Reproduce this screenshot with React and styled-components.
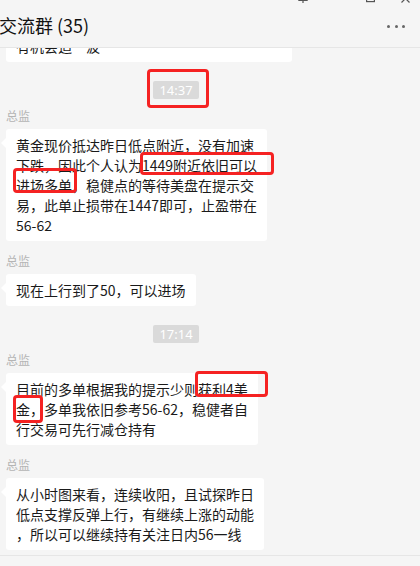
import React from 'react';
import styled, { createGlobalStyle } from 'styled-components';

const COLORS = {
    page: '#f5f5f5',
    line: '#e6e6e6',
    text: '#1a1a1a',
    name: '#b4b4b4',
    stamp: '#dadada',
    mark: '#f52222',
};

const GlobalStyle = createGlobalStyle`
  html, body {
    margin: 0;
    padding: 0;
    background: ${COLORS.page};
  }
  body {
    font-family: "Noto Sans CJK SC", "Noto Sans", sans-serif;
    -webkit-font-smoothing: antialiased;
  }
`;

const Window = styled.div`
    position: relative;
    width: 420px;
    height: 566px;
    overflow: hidden;
    display: flex;
    flex-direction: column;
    background: ${COLORS.page};
`;

const Header = styled.header`
    position: relative;
    height: 47px;
    flex-shrink: 0;
    display: flex;
    align-items: center;
    justify-content: space-between;
    padding-right: 15px;
    border-bottom: 1px solid ${COLORS.line};
`;

const Title = styled.h1`
    margin: 2px 0 0 -1px;
    font-size: 18px;
    font-weight: 400;
    color: #111;
    letter-spacing: 0;
    line-height: 24px;
`;

const Dots = styled.div`
    display: flex;
    gap: 4.5px;
    margin-top: 6px;

    span {
        width: 3px;
        height: 3px;
        border-radius: 50%;
        background: #666;
    }
`;

const Controls = styled.div`
    position: absolute;
    top: -9px;
    left: 298px;
    display: flex;
    align-items: flex-start;

    svg {
        display: block;
        stroke: #555;
        stroke-width: 1.2;
        fill: none;
    }
`;

const ChatArea = styled.main`
    flex: 1;
    overflow: hidden;
`;

// content is scrolled, so the top of the list sits above the visible area
const Feed = styled.div`
    display: flex;
    flex-direction: column;
    align-items: flex-start;
    margin-top: -58px;
    padding-left: 6px;
`;

const Message = styled.div`
    display: flex;
    flex-direction: column;
    align-items: flex-start;
    margin-bottom: 13px;
`;

const Name = styled.div`
    font-size: 12px;
    line-height: 14px;
    height: 14px;
    color: ${COLORS.name};
    margin-bottom: 6px;
`;

const Bubble = styled.div`
    position: relative;
    background: #fff;
    border-radius: 3px;
    padding: 6px 10px;
    font-size: 14px;
    line-height: 20px;
    color: ${COLORS.text};
    white-space: nowrap;

    &::before {
        content: '';
        position: absolute;
        left: -5px;
        top: 9px;
        border-style: solid;
        border-width: 5px 5px 5px 0;
        border-color: transparent #fff transparent transparent;
    }
`;

const TimeRow = styled.div`
    width: 340px;
    display: flex;
    justify-content: center;
    margin: 6px 0 10px;
`;

const Stamp = styled.span`
    background: ${COLORS.stamp};
    color: #fff;
    font-family: "Noto Sans", sans-serif;
    font-size: 13px;
    line-height: 18px;
    height: 18px;
    padding: 0 6px;
    border-radius: 2px;
`;

const Composer = styled.footer`
    height: 10px;
    flex-shrink: 0;
    border-top: 1px solid ${COLORS.line};
    background: ${COLORS.page};
`;

const Mark = styled.div`
    position: absolute;
    border: 3px solid ${COLORS.mark};
    border-radius: 4px;
    box-sizing: border-box;
    pointer-events: none;
`;

const feed = [
    { type: 'msg', lines: ['如果回调到昨日低点附近，可以轻仓试多，', '有机会追一波'] },
    { type: 'time', text: '14:37' },
    {
        type: 'msg',
        lines: [
            '黄金现价抵达昨日低点附近，没有加速',
            '下跌，因此个人认为1449附近依旧可以',
            '进场多单，稳健点的等待美盘在提示交',
            '易，此单止损带在1447即可，止盈带在',
            '56-62',
        ],
    },
    { type: 'msg', lines: ['现在上行到了50，可以进场'] },
    { type: 'time', text: '17:14' },
    {
        type: 'msg',
        lines: [
            '目前的多单根据我的提示少则获利4美',
            '金，多单我依旧参考56-62，稳健者自',
            '行交易可先行减仓持有',
        ],
    },
    {
        type: 'msg',
        lines: [
            '从小时图来看，连续收阳，且试探昨日',
            '低点支撑反弹上行，有继续上涨的动能',
            '，所以可以继续持有关注日内56一线',
        ],
    },
];

// red annotation boxes drawn over the screenshot
const marks = [
    { left: 147, top: 69, width: 62, height: 39 },
    { left: 140, top: 152, width: 134, height: 23 },
    { left: 13, top: 168, width: 64, height: 25 },
    { left: 195, top: 371, width: 73, height: 26 },
    { left: 13, top: 395, width: 30, height: 28 },
];

function App() {
    return (
        <>
            <GlobalStyle />
            <Window>
                <Header>
                    <Controls>
                        <svg width="10" height="12" viewBox="0 0 10 12">
                            <path d="M2.5 1v5.5L1 9.5h8L7.5 6.5V1zM5 9.5V12" />
                        </svg>
                        <svg width="9" height="12" viewBox="0 0 9 12" style={{ marginLeft: 58 }}>
                            <rect x="0.6" y="1" width="7.8" height="9.6" />
                        </svg>
                        <svg width="9" height="12" viewBox="0 0 9 12" style={{ marginLeft: 26 }}>
                            <path d="M0.5 3.5l8 8M8.5 3.5l-8 8" />
                        </svg>
                    </Controls>
                    <Title>交流群 (35)</Title>
                    <Dots>
                        <span />
                        <span />
                        <span />
                    </Dots>
                </Header>
                <ChatArea>
                    <Feed>
                        {feed.map((item, i) =>
                            item.type === 'time' ? (
                                <TimeRow key={i}>
                                    <Stamp>{item.text}</Stamp>
                                </TimeRow>
                            ) : (
                                <Message key={i}>
                                    <Name>总监</Name>
                                    <Bubble>
                                        {item.lines.map((l, j) => (
                                            <div key={j}>{l}</div>
                                        ))}
                                    </Bubble>
                                </Message>
                            )
                        )}
                    </Feed>
                </ChatArea>
                <Composer />
                {marks.map((m, i) => (
                    <Mark key={i} style={m} />
                ))}
            </Window>
        </>
    );
}

export default App;
